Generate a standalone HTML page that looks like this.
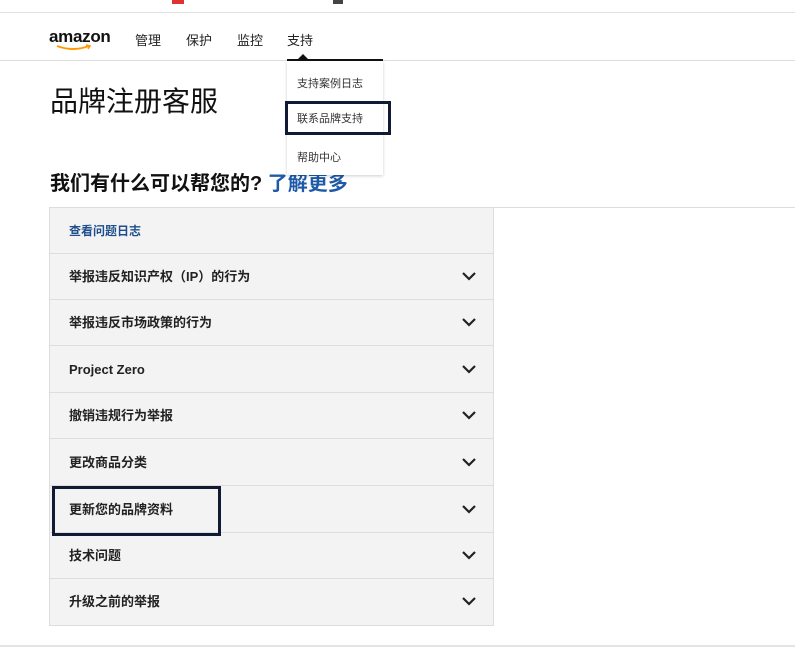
<!DOCTYPE html>
<html><head><meta charset="utf-8"><style>
*{margin:0;padding:0;box-sizing:border-box}
body{width:795px;height:654px;background:#fff;position:relative;overflow:hidden;font-family:"Liberation Sans","Noto Sans CJK SC",sans-serif;color:#111}
.a{position:absolute}
.row{position:absolute;left:50px;width:443px;height:46px;background:#f3f3f3;border-bottom:1px solid #ddd;font-size:13px;font-weight:bold;padding-left:19px;line-height:46px;color:#222}
.chev{position:absolute;right:17px;top:17px;width:14px;height:10px}
</style></head><body>
<div class="a" style="left:0;top:12px;width:795px;height:1px;background:#e2e2e2"></div>
<div class="a" style="left:172px;top:0;width:12px;height:4px;background:#d33"></div>
<div class="a" style="left:333px;top:0;width:10px;height:4px;background:#444"></div>
<div class="a" style="left:49px;top:27px;font-size:17px;font-weight:bold;letter-spacing:-0.3px">amazon</div>
<svg class="a" style="left:55px;top:44px" width="40" height="8"><path d="M2 2 Q18 8 34 2" stroke="#f90" stroke-width="2" fill="none"/><path d="M31 1 L35 2 L33 5" stroke="#f90" stroke-width="1.5" fill="none"/></svg>
<div class="a" style="left:135px;top:30px;font-size:13px;color:#222">管理</div>
<div class="a" style="left:186px;top:30px;font-size:13px;color:#222">保护</div>
<div class="a" style="left:237px;top:30px;font-size:13px;color:#222">监控</div>
<div class="a" style="left:287px;top:30px;font-size:13px;color:#222">支持</div>
<div class="a" style="left:0;top:60px;width:795px;height:1px;background:#ddd"></div>
<div class="a" style="left:50px;top:80px;font-size:28px;color:#111">品牌注册客服</div>
<div class="a" style="left:50px;top:167px;font-size:20px;font-weight:bold;color:#111">我们有什么可以帮您的? <span style="color:#1e5aa8">了解更多</span></div>
<div class="a" style="left:287px;top:59px;width:96px;height:2px;background:#111"></div>
<div class="a" style="left:298px;top:54px;width:0;height:0;border-left:5px solid transparent;border-right:5px solid transparent;border-bottom:5px solid #111"></div>
<div class="a" style="left:287px;top:61px;width:96px;height:114px;background:#fff;box-shadow:0 1px 3px rgba(0,0,0,.2)"></div>
<div class="a" style="left:297px;top:75px;font-size:11px;color:#333">支持案例日志</div>
<div class="a" style="left:285px;top:101px;width:106px;height:34px;border:3px solid #111a33"></div>
<div class="a" style="left:297px;top:110px;font-size:11px;color:#333">联系品牌支持</div>
<div class="a" style="left:297px;top:149px;font-size:11px;color:#333">帮助中心</div>
<div class="a" style="left:50px;top:207px;width:745px;height:1px;background:#ddd"></div>
<div class="a" style="left:49px;top:207px;width:445px;height:419px;border:1px solid #ddd;background:#f3f3f3"></div>
<div class="row" style="top:208px;color:#1e4f8c;font-size:12px">查看问题日志</div>
<div class="row" style="top:254px">举报违反知识产权（IP）的行为<svg class="chev"><path d="M1 2 L7 8 L13 2" stroke="#222" stroke-width="2.2" fill="none"/></svg></div>
<div class="row" style="top:300px">举报违反市场政策的行为<svg class="chev"><path d="M1 2 L7 8 L13 2" stroke="#222" stroke-width="2.2" fill="none"/></svg></div>
<div class="row" style="top:347px">Project Zero<svg class="chev"><path d="M1 2 L7 8 L13 2" stroke="#222" stroke-width="2.2" fill="none"/></svg></div>
<div class="row" style="top:393px">撤销违规行为举报<svg class="chev"><path d="M1 2 L7 8 L13 2" stroke="#222" stroke-width="2.2" fill="none"/></svg></div>
<div class="row" style="top:440px">更改商品分类<svg class="chev"><path d="M1 2 L7 8 L13 2" stroke="#222" stroke-width="2.2" fill="none"/></svg></div>
<div class="row" style="top:487px">更新您的品牌资料<svg class="chev"><path d="M1 2 L7 8 L13 2" stroke="#222" stroke-width="2.2" fill="none"/></svg></div>
<div class="row" style="top:533px">技术问题<svg class="chev"><path d="M1 2 L7 8 L13 2" stroke="#222" stroke-width="2.2" fill="none"/></svg></div>
<div class="row" style="top:579px;border-bottom:none">升级之前的举报<svg class="chev"><path d="M1 2 L7 8 L13 2" stroke="#222" stroke-width="2.2" fill="none"/></svg></div>
<div class="a" style="left:52px;top:486px;width:169px;height:50px;border:3px solid #111a33"></div>
<div class="a" style="left:0;top:645px;width:795px;height:2px;background:#e4e4e4"></div>
</body></html>
